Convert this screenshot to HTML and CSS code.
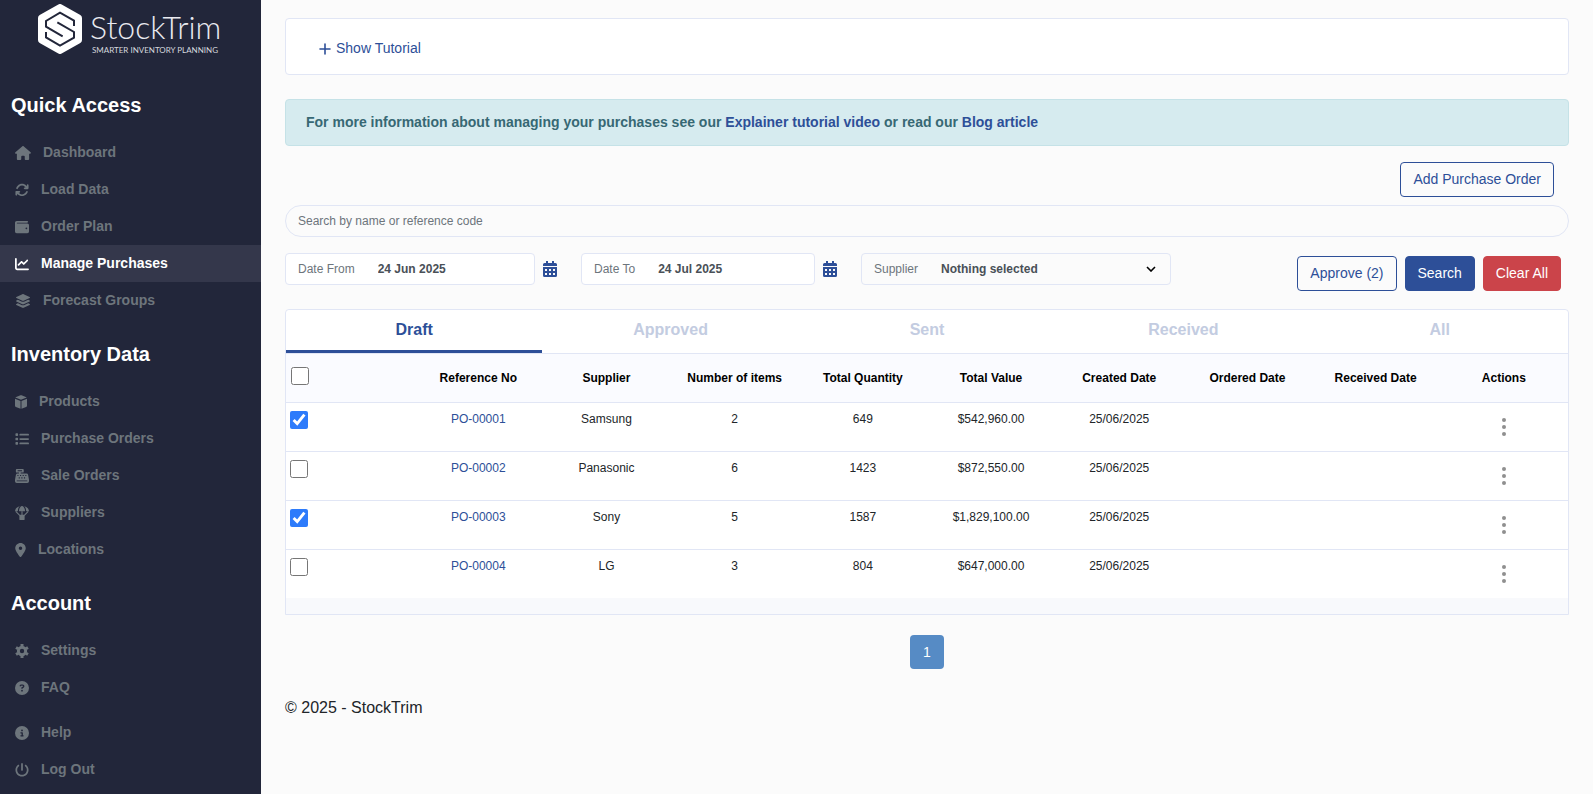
FILE: index.html
```html
<!DOCTYPE html>
<html lang="en">
<head>
<meta charset="utf-8">
<meta name="viewport" content="width=device-width, initial-scale=1">
<title>Manage Purchases - StockTrim</title>
<link rel="stylesheet" href="styles.css">
</head>
<body>
<div class="app">
  <aside class="sidebar">
    <a class="brand" href="#">
      <svg class="brand-mark" viewBox="0 0 132 150" aria-hidden="true">
        <path d="M66 10 122 42V108L66 140 10 108V42Z" fill="#fff" stroke="#fff" stroke-width="20" stroke-linejoin="round"/>
        <path d="M108 66V50L66 26 24 51V68L74 97M24 84V100L66 125 108 101V84L58 55" fill="none" stroke="#22263a" stroke-width="6"/>
      </svg>
      <span class="brand-words">
        <span class="brand-name">StockTrim</span>
        <span class="brand-tag">SMARTER INVENTORY PLANNING</span>
      </span>
    </a>
    <nav>
      <h2 class="nav-title">Quick Access</h2>
      <ul class="nav-list">
        <li><a class="nav-link" href="#"><svg class="icon icon-wide" viewBox="0 0 576 512"><path d="M575.8 255.5c0 18-15 32.1-32 32.1h-32l.7 160.2c0 2.7-.2 5.4-.5 8.1V472c0 22.1-17.9 40-40 40H392c-22.1 0-40-17.9-40-40V384c0-17.7-14.3-32-32-32H256c-17.7 0-32 14.3-32 32v88c0 22.1-17.9 40-40 40H104c-22.1 0-40-17.9-40-40V287.6H32c-18 0-32-14-32-32.1c0-9 3-17 10-24L266.4 8c7-7 15-8 22-8s15 2 21 7L564.8 231.5c8 7 12 15 11 24z"/></svg>Dashboard</a></li>
        <li><a class="nav-link" href="#"><svg class="icon" viewBox="0 0 512 512"><path d="M105.1 202.6c7.7-21.8 20.2-42.3 37.8-59.8c62.5-62.5 163.8-62.5 226.3 0L386.3 160H352c-17.7 0-32 14.3-32 32s14.3 32 32 32H463.9c17.7 0 32-14.3 32-32V80c0-17.7-14.3-32-32-32s-32 14.3-32 32v35.2L414.4 97.6c-87.5-87.5-229.3-87.5-316.8 0C73.2 122 55.6 150.7 44.8 181.4c-5.9 16.7 2.9 34.9 19.5 40.8s34.9-2.9 40.8-19.5zM39 289.3c-5 1.5-9.8 4.2-13.7 8.2c-4 4-6.7 8.8-8.1 14c-.3 1.2-.6 2.5-.8 3.8c-.3 1.7-.4 3.4-.4 5.1V432c0 17.7 14.3 32 32 32s32-14.3 32-32V396.9l17.6 17.5c87.5 87.4 229.3 87.4 316.7 0c24.4-24.4 42.1-53.1 52.9-83.7c5.9-16.7-2.9-34.9-19.5-40.8s-34.9 2.9-40.8 19.5c-7.7 21.8-20.2 42.3-37.8 59.8c-62.5 62.5-163.8 62.5-226.3 0L125.6 352H160c17.7 0 32-14.3 32-32s-14.3-32-32-32H48.4c-3.2 0-6.4.3-9.4 1.3z"/></svg>Load Data</a></li>
        <li><a class="nav-link" href="#"><svg class="icon" viewBox="0 0 512 512"><path d="M64 32C28.7 32 0 60.7 0 96V416c0 35.3 28.7 64 64 64H448c35.3 0 64-28.7 64-64V192c0-35.3-28.7-64-64-64H80c-8.8 0-16-7.2-16-16s7.2-16 16-16H448c17.7 0 32-14.3 32-32s-14.3-32-32-32H64zM416 272a32 32 0 1 1 0 64 32 32 0 1 1 0-64z"/></svg>Order Plan</a></li>
        <li><a class="nav-link active" href="#" aria-current="page"><svg class="icon" viewBox="0 0 512 512"><path d="M64 64c0-17.7-14.3-32-32-32S0 46.3 0 64V400c0 44.2 35.8 80 80 80H480c17.7 0 32-14.3 32-32s-14.3-32-32-32H80c-8.8 0-16-7.2-16-16V64zm406.6 86.6c12.5-12.5 12.5-32.8 0-45.3s-32.8-12.5-45.3 0L320 210.7l-57.4-57.4c-12.5-12.5-32.8-12.5-45.3 0l-112 112c-12.5 12.5-12.5 32.8 0 45.3s32.8 12.5 45.3 0L240 221.3l57.4 57.4c12.5 12.5 32.8 12.5 45.3 0l128-128z"/></svg>Manage Purchases</a></li>
        <li><a class="nav-link" href="#"><svg class="icon icon-wide" viewBox="0 0 576 512"><path d="M264.5 5.2c14.9-6.9 32.1-6.9 47 0l218.6 101c8.5 3.9 13.9 12.4 13.9 21.8s-5.4 17.9-13.9 21.8l-218.6 101c-14.9 6.9-32.1 6.9-47 0L45.9 149.8C37.4 145.8 32 137.3 32 128s5.4-17.9 13.9-21.8L264.5 5.2zM476.9 209.6l53.2 24.6c8.5 3.9 13.9 12.4 13.9 21.8s-5.4 17.9-13.9 21.8l-218.6 101c-14.9 6.9-32.1 6.9-47 0L45.9 277.8C37.4 273.8 32 265.3 32 256s5.4-17.9 13.9-21.8l53.2-24.6 152 70.2c23.4 10.8 50.4 10.8 73.8 0l152-70.2zm-152 198.2l152-70.2 53.2 24.6c8.5 3.9 13.9 12.4 13.9 21.8s-5.4 17.9-13.9 21.8l-218.6 101c-14.9 6.9-32.1 6.9-47 0L45.9 405.8C37.4 401.8 32 393.3 32 384s5.4-17.9 13.9-21.8l53.2-24.6 152 70.2c23.4 10.8 50.4 10.8 73.8 0z"/></svg>Forecast Groups</a></li>
      </ul>
      <h2 class="nav-title">Inventory Data</h2>
      <ul class="nav-list">
        <li><a class="nav-link" href="#"><svg class="icon icon-small" viewBox="0 0 448 512"><path d="M203 8q21-8 42 0L404 66q22 9 32 26L224 172 12 92q10-17 32-26ZM0 136 206 214V508L34 444Q0 430 0 396ZM448 136V396q0 34-34 48L242 508V214Z"/></svg>Products</a></li>
        <li><a class="nav-link" href="#"><svg class="icon" viewBox="0 0 512 512"><path d="M40 48h48q24 0 24 24v48q0 24-24 24H40q-24 0-24-24V72q0-24 24-24ZM40 208h48q24 0 24 24v48q0 24-24 24H40q-24 0-24-24v-48q0-24 24-24ZM40 368h48q24 0 24 24v48q0 24-24 24H40q-24 0-24-24v-48q0-24 24-24ZM192 64H480a32 32 0 0 1 0 64H192a32 32 0 0 1 0-64ZM192 224H480a32 32 0 0 1 0 64H192a32 32 0 0 1 0-64ZM192 384H480a32 32 0 0 1 0 64H192a32 32 0 0 1 0-64Z"/></svg>Purchase Orders</a></li>
        <li><a class="nav-link" href="#"><svg class="icon" viewBox="0 0 512 512"><path fill-rule="evenodd" d="M64 0H288q32 0 32 32v64q0 32-32 32H208v32H422q48 0 56 46l34 190V448q0 64-64 64H64Q0 512 0 448V396L34 206q8-46 56-46h54v-32H64q-32 0-32-32V32Q32 0 64 0ZM96 48V80H256V48ZM88 216v40h40v-40ZM184 216v40h40v-40ZM280 216v40h40v-40ZM376 216v40h40v-40ZM136 304v40h40v-40ZM232 304v40h40v-40ZM328 304v40h40v-40ZM64 416v32H448V416Z"/></svg>Sale Orders</a></li>
        <li><a class="nav-link" href="#"><svg class="icon" viewBox="0 0 512 512"><path d="M144 192C144 90 200 0 256 0S368 90 368 192ZM176 10C124 50 104 120 104 192H20Q0 192 2 172C18 80 96 24 176 10ZM336 10C388 50 408 120 408 192h84q20 0 18-20C494 80 416 24 336 10Z"/><path d="M28 200 180 352M484 200 332 352M256 190V330" fill="none" stroke="currentColor" stroke-width="40"/><path d="M192 320H320q32 0 32 32V480q0 32-32 32H192q-32 0-32-32V352q0-32 32-32Z"/></svg>Suppliers</a></li>
        <li><a class="nav-link" href="#"><svg class="icon icon-slim" viewBox="0 0 384 512"><path d="M215.7 499.2C267 435 384 279.4 384 192C384 86 298 0 192 0S0 86 0 192c0 87.4 117 243 168.3 307.2c12.3 15.3 35.1 15.3 47.4 0zM192 128a64 64 0 1 1 0 128 64 64 0 1 1 0-128z"/></svg>Locations</a></li>
      </ul>
      <h2 class="nav-title">Account</h2>
      <ul class="nav-list">
        <li><a class="nav-link" href="#"><svg class="icon" viewBox="0 0 512 512"><g fill="none" stroke="currentColor"><circle cx="256" cy="256" r="134" stroke-width="108"/><path d="M256 4V90M256 422V508M38 130 112 173M400 339 474 382M38 382 112 339M400 173 474 130" stroke-width="110"/></g></svg>Settings</a></li>
        <li><a class="nav-link" href="#"><svg class="icon" viewBox="0 0 512 512"><path d="M256 512A256 256 0 1 0 256 0a256 256 0 1 0 0 512zM169.8 165.3c7.9-22.3 29.1-37.3 52.8-37.3h58.3c34.9 0 63.1 28.3 63.1 63.1c0 22.6-12.1 43.5-31.7 54.8L280 264.4c-.2 13-10.9 23.6-24 23.6c-13.3 0-24-10.7-24-24V250.5c0-8.6 4.6-16.5 12.1-20.8l44.3-25.4c4.7-2.7 7.6-7.7 7.6-13.1c0-8.4-6.8-15.1-15.1-15.1H222.6c-3.4 0-6.4 2.1-7.5 5.3l-.4 1.2c-4.4 12.5-18.2 19-30.6 14.6s-19-18.2-14.6-30.6l.4-1.2zM224 352a32 32 0 1 1 64 0 32 32 0 1 1 -64 0z"/></svg>FAQ</a></li>
      </ul>
      <ul class="nav-list nav-list-end">
        <li><a class="nav-link" href="#"><svg class="icon" viewBox="0 0 512 512"><path d="M256 512A256 256 0 1 0 256 0a256 256 0 1 0 0 512zM216 336h24V272H216c-13.3 0-24-10.7-24-24s10.7-24 24-24h48c13.3 0 24 10.7 24 24v88h8c13.3 0 24 10.7 24 24s-10.7 24-24 24H216c-13.3 0-24-10.7-24-24s10.7-24 24-24zm40-208a32 32 0 1 1 0 64 32 32 0 1 1 0-64z"/></svg>Help</a></li>
        <li><a class="nav-link" href="#"><svg class="icon" viewBox="0 0 512 512"><path d="M288 32c0-17.7-14.3-32-32-32s-32 14.3-32 32V256c0 17.7 14.3 32 32 32s32-14.3 32-32V32zM143.5 120.6c13.6-11.3 15.4-31.5 4.1-45.1s-31.5-15.4-45.1-4.1C49.7 115.4 16 181.8 16 256c0 132.5 107.5 240 240 240s240-107.5 240-240c0-74.2-33.8-140.6-86.6-184.6c-13.6-11.3-33.8-9.4-45.1 4.1s-9.4 33.8 4.1 45.1c38.9 32.3 63.5 81 63.5 135.4c0 97.2-78.8 176-176 176s-176-78.8-176-176c0-54.4 24.7-103.1 63.5-135.4z"/></svg>Log Out</a></li>
      </ul>
    </nav>
  </aside>

  <main class="main">
    <section class="tutorial">
      <a class="tutorial-link" href="#"><svg class="plus" viewBox="0 0 12 12" aria-hidden="true"><path d="M6 1V11M1 6H11" fill="none" stroke="currentColor" stroke-width="1.600" stroke-linecap="round"/></svg>Show Tutorial</a>
    </section>

    <p class="notice">For more information about managing your purchases see our <a href="#">Explainer tutorial video</a> or read our <a href="#">Blog article</a></p>

    <div class="toolbar"><button class="btn btn-outline" type="button">Add Purchase Order</button></div>

    <form>
      <input class="search" type="search" placeholder="Search by name or reference code" aria-label="Search by name or reference code">
      <div class="filters">
        <div class="date-filter">
          <div class="field field-from">
            <label for="date-from">Date From</label>
            <input id="date-from" type="text" value="24 Jun 2025">
          </div>
          <button class="calendar" type="button" aria-label="Choose start date"><svg viewBox="0 0 14 16"><path fill-rule="evenodd" d="M3 0H5V2H9V0H11V2H12.500Q14 2 14 3.500V5H0V3.500Q0 2 1.500 2H3ZM0 6H14V14.500Q14 16 12.500 16H1.500Q0 16 0 14.500ZM2 8V10H4V8ZM6 8V10H8V8ZM10 8V10H12V8ZM2 12V14H4V12ZM6 12V14H8V12ZM10 12V14H12V12Z"/></svg></button>
        </div>
        <div class="date-filter">
          <div class="field field-to">
            <label for="date-to">Date To</label>
            <input id="date-to" type="text" value="24 Jul 2025">
          </div>
          <button class="calendar" type="button" aria-label="Choose end date"><svg viewBox="0 0 14 16"><path fill-rule="evenodd" d="M3 0H5V2H9V0H11V2H12.500Q14 2 14 3.500V5H0V3.500Q0 2 1.500 2H3ZM0 6H14V14.500Q14 16 12.500 16H1.500Q0 16 0 14.500ZM2 8V10H4V8ZM6 8V10H8V8ZM10 8V10H12V8ZM2 12V14H4V12ZM6 12V14H8V12ZM10 12V14H12V12Z"/></svg></button>
        </div>
        <div class="field field-supplier">
          <label for="supplier">Supplier</label>
          <select id="supplier"><option>Nothing selected</option><option>Samsung</option><option>Panasonic</option><option>Sony</option><option>LG</option></select>
          <svg class="chevron" viewBox="0 0 10 6" aria-hidden="true"><path d="M1 1 5 5 9 1" fill="none" stroke="currentColor" stroke-width="1.600"/></svg>
        </div>
        <div class="actions">
          <button class="btn btn-outline" type="button">Approve (2)</button>
          <button class="btn btn-primary" type="submit">Search</button>
          <button class="btn btn-danger" type="reset">Clear All</button>
        </div>
      </div>
    </form>

    <section class="card">
      <div class="tabs" role="tablist">
        <button class="tab selected" type="button" role="tab" aria-selected="true">Draft</button>
        <button class="tab" type="button" role="tab" aria-selected="false">Approved</button>
        <button class="tab" type="button" role="tab" aria-selected="false">Sent</button>
        <button class="tab" type="button" role="tab" aria-selected="false">Received</button>
        <button class="tab" type="button" role="tab" aria-selected="false">All</button>
      </div>
      <table class="orders">
        <thead>
          <tr>
            <th class="pick"><input type="checkbox" aria-label="Select all orders"></th>
            <th>Reference No</th><th>Supplier</th><th>Number of items</th><th>Total Quantity</th><th>Total Value</th><th>Created Date</th><th>Ordered Date</th><th>Received Date</th><th>Actions</th>
          </tr>
        </thead>
        <tbody>
          <tr>
            <td class="pick"><input type="checkbox" aria-label="Select PO-00001" checked></td>
            <td><a href="#">PO-00001</a></td><td>Samsung</td><td>2</td><td>649</td><td>$542,960.00</td><td>25/06/2025</td><td></td><td></td>
            <td class="more-cell"><button class="more" type="button" aria-label="Actions for PO-00001"><svg viewBox="0 0 4 18"><circle cx="2" cy="2" r="2"/><circle cx="2" cy="9" r="2"/><circle cx="2" cy="16" r="2"/></svg></button></td>
          </tr>
          <tr>
            <td class="pick"><input type="checkbox" aria-label="Select PO-00002"></td>
            <td><a href="#">PO-00002</a></td><td>Panasonic</td><td>6</td><td>1423</td><td>$872,550.00</td><td>25/06/2025</td><td></td><td></td>
            <td class="more-cell"><button class="more" type="button" aria-label="Actions for PO-00002"><svg viewBox="0 0 4 18"><circle cx="2" cy="2" r="2"/><circle cx="2" cy="9" r="2"/><circle cx="2" cy="16" r="2"/></svg></button></td>
          </tr>
          <tr>
            <td class="pick"><input type="checkbox" aria-label="Select PO-00003" checked></td>
            <td><a href="#">PO-00003</a></td><td>Sony</td><td>5</td><td>1587</td><td>$1,829,100.00</td><td>25/06/2025</td><td></td><td></td>
            <td class="more-cell"><button class="more" type="button" aria-label="Actions for PO-00003"><svg viewBox="0 0 4 18"><circle cx="2" cy="2" r="2"/><circle cx="2" cy="9" r="2"/><circle cx="2" cy="16" r="2"/></svg></button></td>
          </tr>
          <tr>
            <td class="pick"><input type="checkbox" aria-label="Select PO-00004"></td>
            <td><a href="#">PO-00004</a></td><td>LG</td><td>3</td><td>804</td><td>$647,000.00</td><td>25/06/2025</td><td></td><td></td>
            <td class="more-cell"><button class="more" type="button" aria-label="Actions for PO-00004"><svg viewBox="0 0 4 18"><circle cx="2" cy="2" r="2"/><circle cx="2" cy="9" r="2"/><circle cx="2" cy="16" r="2"/></svg></button></td>
          </tr>
        </tbody>
      </table>
    </section>

    <nav class="pager" aria-label="Pages"><a class="page" href="#" aria-current="page">1</a></nav>
    <footer class="footer">© 2025 - StockTrim</footer>
  </main>
</div>
</body>
</html>
```
FILE: styles.css
```css
* {
  box-sizing: border-box;
}

body {
  margin: 0;
  background: #fbfbfb;
  color: #212529;
  font: 14px/21px "Liberation Sans", Arial, sans-serif;
}

a {
  color: #2d4f98;
  text-decoration: none;
}

button,
input,
select {
  font: inherit;
}

.app {
  display: flex;
  min-height: 100vh;
}

/* Sidebar */
.sidebar {
  flex: 0 0 261px;
  background: #22263a;
}

.brand {
  display: flex;
  gap: 8px;
  height: 70px;
  padding: 4px 0 0 38px;
  color: #fff;
}

.brand-mark {
  width: 44px;
  height: 50px;
}

.brand-words {
  display: flex;
  flex-direction: column;
  padding-top: 5px;
  white-space: nowrap;
}

.brand-name {
  font: 300 32px/36px Lato, "Open Sans", sans-serif;
  color: #e9eaf0;
}

.brand-tag {
  padding-left: 2px;
  font: 8px/10px Lato, "Open Sans", sans-serif;
  color: #d5d7de;
}

.nav-title {
  margin: 23px 0 17px;
  padding-left: 11px;
  color: #fff;
  font-size: 20px;
  line-height: 24px;
}

.nav-list {
  margin: 0;
  padding: 0;
  list-style: none;
}

.nav-list-end {
  margin-top: 8px;
}

.nav-link {
  display: flex;
  align-items: center;
  gap: 12px;
  height: 37px;
  padding-left: 15px;
  color: #6d757c;
  font-weight: 700;
}

.nav-link.active {
  background: #34374b;
  color: #fff;
}

.icon {
  width: 14px;
  height: 14px;
  fill: currentColor;
}

.icon-wide {
  width: 16px;
}

.icon-small {
  width: 12px;
}

.icon-slim {
  width: 11px;
}

/* Main column */
.main {
  flex: 1;
  min-width: 0;
  padding: 18px 24px;
}

.tutorial {
  display: flex;
  padding: 19px 33px 15px;
  background: #fff;
  border: 1px solid #e1e6f5;
  border-radius: 4px;
}

.tutorial-link {
  display: flex;
  align-items: center;
  gap: 5px;
}

.plus {
  width: 12px;
  height: 12px;
}

.notice {
  margin: 24px 0 16px;
  padding: 12px 20px;
  background: #d6ebef;
  border: 1px solid #c5e2e7;
  border-radius: 4px;
  color: #376874;
  font-weight: 700;
}

.toolbar {
  display: flex;
  justify-content: flex-end;
  padding-right: 15px;
}

.btn {
  padding: 6px 12px;
  border: 1px solid #2d4f98;
  border-radius: 4px;
  white-space: nowrap;
}

.btn-outline {
  background: transparent;
  color: #2d4f98;
}

.btn-primary {
  background: #2d4f98;
  color: #fff;
}

.btn-danger {
  background: #cb444a;
  border-color: #cb444a;
  color: #fff;
}

.search {
  appearance: none;
  display: block;
  width: 100%;
  height: 32px;
  margin-top: 8px;
  padding: 0 12px;
  background: transparent;
  border: 1px solid #e1e6f5;
  border-radius: 16px;
  font-size: 12px;
}

.search::placeholder {
  color: #6d757c;
}

.filters {
  display: flex;
  align-items: flex-start;
  gap: 24px;
  margin: 16px 0 18px;
  padding-right: 8px;
}

.date-filter {
  display: flex;
  align-items: center;
  gap: 8px;
}

.field {
  display: flex;
  align-items: center;
  height: 32px;
  padding: 0 12px;
  background: #fff;
  border: 1px solid #e1e6f5;
  border-radius: 4px;
  color: #6d757c;
  font-size: 12px;
  white-space: nowrap;
}

.field input,
.field select {
  appearance: none;
  flex: 1;
  min-width: 0;
  padding: 0;
  background: transparent;
  border: 0;
  color: #495057;
  font-weight: 700;
}

.field label {
  padding-right: 23px;
}

.field-from {
  width: 250px;
}

.field-to {
  width: 234px;
}

.field-supplier {
  width: 310px;
  background: transparent;
}

.chevron {
  width: 10px;
  height: 6px;
  margin-right: 2px;
  color: #000;
}

.calendar {
  display: flex;
  padding: 0;
  background: none;
  border: 0;
}

.calendar svg {
  width: 14px;
  height: 16px;
  fill: #2d4f98;
}

.actions {
  display: flex;
  gap: 8px;
  margin-left: auto;
  padding-top: 3px;
}

/* Orders */
.card {
  padding-bottom: 16px;
  background: #f8f9fc;
  border: 1px solid #e1e6f5;
  border-radius: 4px 4px 0 0;
}

.tabs {
  display: grid;
  grid-template-columns: repeat(5, 1fr);
  background: #fff;
  border-bottom: 1px solid #e1e6f5;
  border-radius: 4px 4px 0 0;
}

.tab {
  padding: 8px 0;
  background: none;
  border: 0;
  border-bottom: 3px solid transparent;
  color: #c3cce1;
  font-size: 16px;
  font-weight: 700;
  line-height: 24px;
}

.tab.selected {
  border-bottom-color: #2d4f98;
  color: #2d4f98;
}

.orders {
  width: 100%;
  table-layout: fixed;
  border-collapse: separate;
  border-spacing: 0;
  font-size: 12px;
  line-height: 18px;
  text-align: center;
}

.orders th {
  height: 49px;
  padding: 0;
  background: #fafbff;
  border-bottom: 1px solid #e1e6f5;
  color: #000;
}

.orders td {
  height: 49px;
  padding: 7px 0 0;
  background: #fff;
  border-bottom: 1px solid #e1e6f5;
  vertical-align: top;
}

.orders tbody tr:last-child td {
  height: 48px;
  border-bottom: 0;
}

.orders .pick {
  padding: 8px 4px 0;
  text-align: left;
}

.orders th.pick {
  padding: 13px 5px 0;
  vertical-align: top;
}

.pick input {
  display: block;
  width: 18px;
  height: 18px;
  margin: 0;
  accent-color: #2d7bfb;
}

.orders .more-cell {
  padding-top: 15px;
}

.more {
  padding: 0;
  background: none;
  border: 0;
}

.more svg {
  display: block;
  width: 4px;
  height: 18px;
  fill: #8f8f8f;
}

.pager {
  display: flex;
  justify-content: center;
  margin: 20px 0 27px;
}

.page {
  width: 34px;
  padding: 7px 0 6px;
  background: #568bc5;
  border-radius: 4px;
  color: #fff;
  text-align: center;
}

.footer {
  font-size: 16px;
  line-height: 24px;
}
```
